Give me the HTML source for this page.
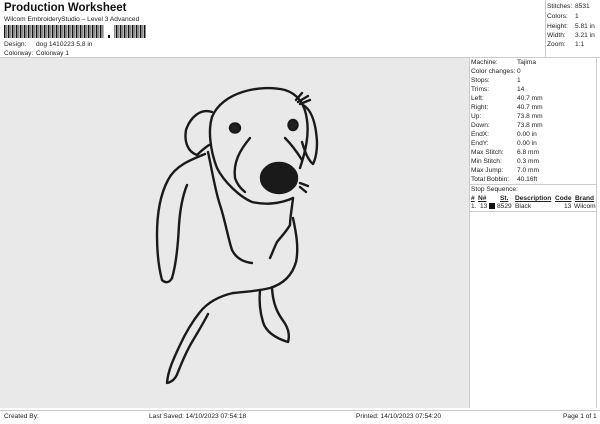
<!DOCTYPE html>
<html><head><style>
*{margin:0;padding:0;box-sizing:border-box}
body{width:600px;height:424px;background:#fff;position:relative;overflow:hidden;font-family:"Liberation Sans",sans-serif;color:#222}
.a{position:absolute;white-space:nowrap;font-size:6.6px;line-height:9px}
.r{position:absolute;font-size:6.6px;line-height:9px;white-space:nowrap}
</style></head><body>
<div class="a" style="left:4px;top:1px;font-size:11.5px;line-height:14px;font-weight:bold;color:#111">Production Worksheet</div>
<div class="a" style="left:4px;top:15px">Wilcom EmbroideryStudio – Level 3 Advanced</div>
<svg style="position:absolute;left:4px;top:25px" width="142" height="14">
<rect x="0" y="0" width="100" height="13" fill="url(#p)"/>
<defs><pattern id="p" width="4" height="13" patternUnits="userSpaceOnUse"><rect width="1.5" height="13" fill="#111"/><rect x="2.5" width="0.8" height="13" fill="#111"/></pattern></defs>
<rect x="104" y="10" width="2" height="3" fill="#111"/>
<rect x="110" y="0" width="32" height="13" fill="url(#p)"/>
</svg>
<div class="a" style="left:4px;top:40px">Design:</div><div class="a" style="left:36px;top:40px">dog 1410223 5,8 in</div>
<div class="a" style="left:4px;top:49px">Colorway:</div><div class="a" style="left:36px;top:49px">Colorway 1</div>
<div style="position:absolute;left:0;top:57px;width:600px;border-top:1px solid #ccc"></div>
<div style="position:absolute;left:545px;top:0;width:55px;height:57px;border-left:1px solid #ccc"></div>
<div class="r" style="left:547px;top:2px">Stitches:</div><div class="r" style="left:575px;top:2px">8531</div>
<div class="r" style="left:547px;top:12px">Colors:</div><div class="r" style="left:575px;top:12px">1</div>
<div class="r" style="left:547px;top:22px">Height:</div><div class="r" style="left:575px;top:22px">5.81 in</div>
<div class="r" style="left:547px;top:31px">Width:</div><div class="r" style="left:575px;top:31px">3.21 in</div>
<div class="r" style="left:547px;top:40px">Zoom:</div><div class="r" style="left:575px;top:40px">1:1</div>
<div style="position:absolute;left:0;top:58px;width:469px;height:350px;background:#e9e9e9"></div>
<div style="position:absolute;left:469px;top:58px;width:128px;height:350px;border-right:1px solid #ccc;border-left:1px solid #ccc"></div>
<div style="position:absolute;left:469px;top:211px;width:128px;border-top:1px solid #ccc"></div>
<div class="r" style="left:471px;top:58px">Machine:</div><div class="r" style="left:517px;top:58px">Tajima</div>
<div class="r" style="left:471px;top:67px">Color changes:</div><div class="r" style="left:517px;top:67px">0</div>
<div class="r" style="left:471px;top:76px">Stops:</div><div class="r" style="left:517px;top:76px">1</div>
<div class="r" style="left:471px;top:85px">Trims:</div><div class="r" style="left:517px;top:85px">14</div>
<div class="r" style="left:471px;top:94px">Left:</div><div class="r" style="left:517px;top:94px">40.7 mm</div>
<div class="r" style="left:471px;top:103px">Right:</div><div class="r" style="left:517px;top:103px">40.7 mm</div>
<div class="r" style="left:471px;top:112px">Up:</div><div class="r" style="left:517px;top:112px">73.8 mm</div>
<div class="r" style="left:471px;top:121px">Down:</div><div class="r" style="left:517px;top:121px">73.8 mm</div>
<div class="r" style="left:471px;top:130px">EndX:</div><div class="r" style="left:517px;top:130px">0.00 in</div>
<div class="r" style="left:471px;top:139px">EndY:</div><div class="r" style="left:517px;top:139px">0.00 in</div>
<div class="r" style="left:471px;top:148px">Max Stitch:</div><div class="r" style="left:517px;top:148px">6.8 mm</div>
<div class="r" style="left:471px;top:157px">Min Stitch:</div><div class="r" style="left:517px;top:157px">0.3 mm</div>
<div class="r" style="left:471px;top:166px">Max Jump:</div><div class="r" style="left:517px;top:166px">7.0 mm</div>
<div class="r" style="left:471px;top:175px">Total Bobbin:</div><div class="r" style="left:517px;top:175px">40.16ft</div>
<div style="position:absolute;left:469px;top:184px;width:128px;border-top:1px solid #ccc"></div>
<div class="r" style="left:471px;top:185px">Stop Sequence:</div>
<div class="r" style="left:471px;top:194px;font-weight:bold;text-decoration:underline">#</div>
<div class="r" style="left:478px;top:194px;font-weight:bold;text-decoration:underline">N#</div>
<div class="r" style="left:500px;top:194px;font-weight:bold;text-decoration:underline">St.</div>
<div class="r" style="left:515px;top:194px;font-weight:bold;text-decoration:underline">Description</div>
<div class="r" style="left:555px;top:194px;font-weight:bold;text-decoration:underline">Code</div>
<div class="r" style="left:575px;top:194px;font-weight:bold;text-decoration:underline">Brand</div>
<div class="r" style="left:471px;top:202px">1.</div><div class="r" style="left:480px;top:202px">13</div>
<div style="position:absolute;left:489px;top:203px;width:6px;height:6px;background:#111"></div>
<div class="r" style="left:497px;top:202px">8529</div><div class="r" style="left:515px;top:202px">Black</div>
<div class="r" style="left:564px;top:202px">13</div><div class="r" style="left:574px;top:202px">Wilcom</div>
<svg style="position:absolute;left:0;top:0" width="600" height="424" fill="none" stroke="#1a1a1a" stroke-width="2.4" stroke-linejoin="round" stroke-linecap="round">
<path d="M212,117 C222,92 260,84 285,90 C298,94 305,104 307,120 C309,135 306,150 300,168"/>
<path d="M212,117 C208,130 210,150 217,168 C224,182 240,197 252,202 C265,205 280,204 293,198"/>
<path d="M212,112 C200,108 190,118 186,130 C184,142 188,152 197,155 C202,150 206,147 209,145"/>
<path d="M303,105 C312,110 316,125 317,142 C317,152 315,160 313,164 C308,160 305,152 302,142"/>
<path d="M250,138 C240,150 233,162 235,178 C237,184 240,188 245,192"/>
<path d="M285,138 C292,145 297,152 302,160"/>
<ellipse cx="235" cy="128" rx="5" ry="4.5" fill="#222"/>
<ellipse cx="293" cy="125" rx="4.5" ry="5" fill="#222"/>
<ellipse cx="279" cy="178" rx="18" ry="15" fill="#1a1a1a"/>
<path d="M205,154 C190,160 175,166 168,180 C160,195 157,215 157,235 C157,250 158,265 162,280 C166,284 170,282 172,278"/>
<path d="M172,278 C176,265 178,245 179,225 C180,210 183,195 187,185"/>
<path d="M208,152 C212,170 215,190 220,205 C225,220 228,238 232,250 C236,258 243,262 252,263"/>
<path d="M293,198 C292,208 290,218 290,225 C286,232 280,238 277,242 C274,248 272,254 270,258"/>
<path d="M293,218 C296,232 299,248 296,262 C292,276 283,284 270,288 C258,291 245,292 233,293"/>
<path d="M260,290 C259,300 260,312 263,322 C266,332 275,338 288,342 C290,335 288,328 284,322 C278,314 273,305 272,288"/>
<path d="M233,293 C220,296 208,302 200,312 C192,322 186,332 180,345 C174,358 168,370 167,383 C172,382 176,378 178,372 C182,362 186,352 192,342 C198,332 204,322 208,314"/>
<path d="M296,100 L302,93 M298,102 L308,96 M300,104 L310,100 M300,183 L308,186 M300,187 L306,192"/>
</svg>
<div style="position:absolute;left:0;top:410px;width:600px;border-top:1px solid #ccc"></div>
<div class="a" style="left:4px;top:412px">Created By:</div>
<div class="a" style="left:149px;top:412px">Last Saved: 14/10/2023 07:54:18</div>
<div class="a" style="left:356px;top:412px">Printed: 14/10/2023 07:54:20</div>
<div class="a" style="left:563px;top:412px">Page 1 of 1</div>
</body></html>
